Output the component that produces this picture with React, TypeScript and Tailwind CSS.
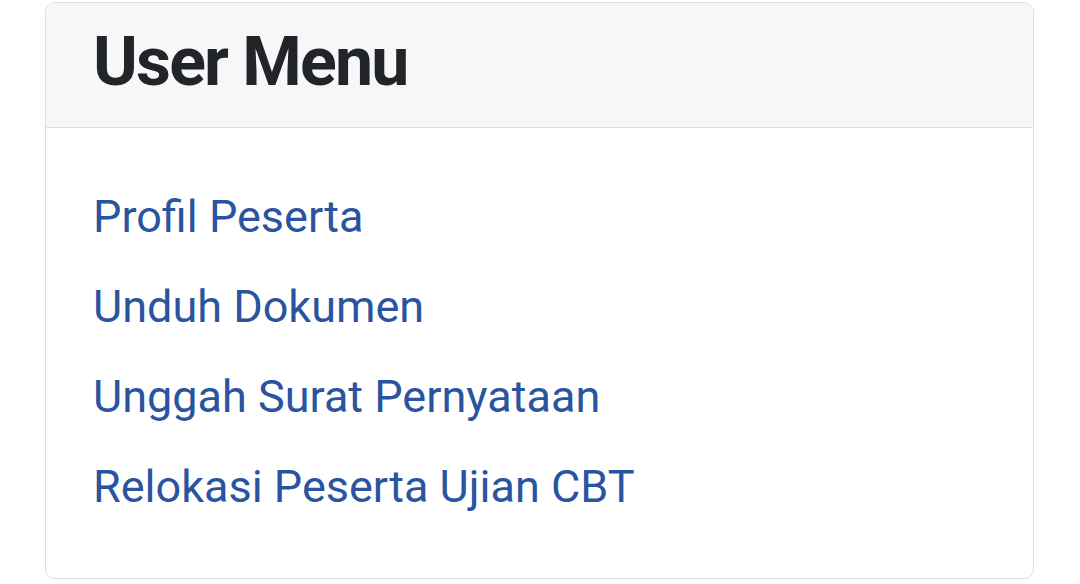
const LINKS = [
  "Profil Peserta",
  "Unduh Dokumen",
  "Unggah Surat Pernyataan",
  "Relokasi Peserta Ujian CBT",
];

export default function App() {
  return (
    <div className="min-h-[584px] w-[1080px] bg-white pt-[2px] pl-[45px] font-['Roboto',sans-serif]">
      <div className="h-[577px] w-[989px] overflow-hidden rounded-[10px] border border-[#dedede] bg-white">
        <div className="border-b border-[#dedede] bg-[#f7f7f7] px-[47px] pt-[18px] pb-[24px]">
          <h3 className="text-[68px] leading-[82px] font-bold tracking-[-1.8px] text-[#212529]">User Menu</h3>
        </div>
        <ul className="px-[47px] pt-[44px]">
          {LINKS.map((l) => (
            <li key={l}>
              <a href="#" className="text-[45px] leading-[90px] text-[#2a54a0]">
                {l}
              </a>
            </li>
          ))}
        </ul>
      </div>
    </div>
  );
}
